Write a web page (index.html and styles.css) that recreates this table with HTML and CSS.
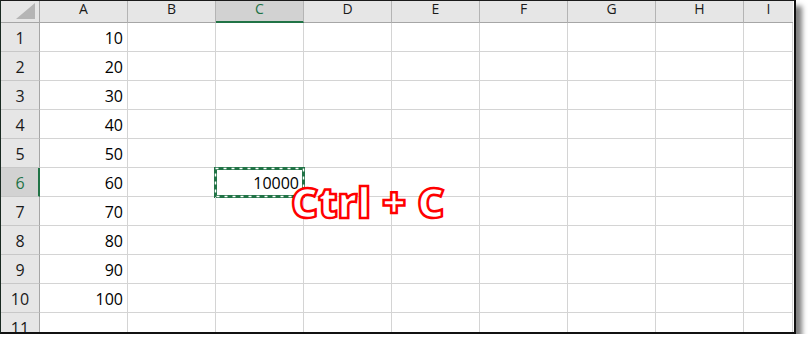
FILE: index.html
```html
<!DOCTYPE html>
<html>
<head>
<meta charset="utf-8">
<link rel="stylesheet" href="styles.css">
</head>
<body>
<div class="sheet">
  <div class="grid">
    <div class="corner"><span class="tri"></span></div>
    <div class="colhead">A</div>
    <div class="colhead">B</div>
    <div class="colhead sel">C</div>
    <div class="colhead">D</div>
    <div class="colhead">E</div>
    <div class="colhead">F</div>
    <div class="colhead">G</div>
    <div class="colhead">H</div>
    <div class="colhead last">I</div>

    <div class="rowhead">1</div><div class="cell">10</div><div class="cell"></div><div class="cell"></div><div class="cell"></div><div class="cell"></div><div class="cell"></div><div class="cell"></div><div class="cell"></div><div class="cell"></div>
    <div class="rowhead">2</div><div class="cell">20</div><div class="cell"></div><div class="cell"></div><div class="cell"></div><div class="cell"></div><div class="cell"></div><div class="cell"></div><div class="cell"></div><div class="cell"></div>
    <div class="rowhead">3</div><div class="cell">30</div><div class="cell"></div><div class="cell"></div><div class="cell"></div><div class="cell"></div><div class="cell"></div><div class="cell"></div><div class="cell"></div><div class="cell"></div>
    <div class="rowhead">4</div><div class="cell">40</div><div class="cell"></div><div class="cell"></div><div class="cell"></div><div class="cell"></div><div class="cell"></div><div class="cell"></div><div class="cell"></div><div class="cell"></div>
    <div class="rowhead">5</div><div class="cell">50</div><div class="cell"></div><div class="cell"></div><div class="cell"></div><div class="cell"></div><div class="cell"></div><div class="cell"></div><div class="cell"></div><div class="cell"></div>
    <div class="rowhead sel">6</div><div class="cell">60</div><div class="cell"></div><div class="cell active">10000<svg class="ants" width="91" height="31" viewBox="0 0 91 31"><rect x="1.5" y="1.5" width="88" height="28" fill="none" stroke="#217346" stroke-width="3"/><rect x="1.5" y="1.5" width="88" height="28" fill="none" stroke="#ffffff" stroke-width="1.5" stroke-dasharray="3 5"/></svg></div><div class="cell"></div><div class="cell"></div><div class="cell"></div><div class="cell"></div><div class="cell"></div><div class="cell"></div>
    <div class="rowhead">7</div><div class="cell">70</div><div class="cell"></div><div class="cell"></div><div class="cell"></div><div class="cell"></div><div class="cell"></div><div class="cell"></div><div class="cell"></div><div class="cell"></div>
    <div class="rowhead">8</div><div class="cell">80</div><div class="cell"></div><div class="cell"></div><div class="cell"></div><div class="cell"></div><div class="cell"></div><div class="cell"></div><div class="cell"></div><div class="cell"></div>
    <div class="rowhead">9</div><div class="cell">90</div><div class="cell"></div><div class="cell"></div><div class="cell"></div><div class="cell"></div><div class="cell"></div><div class="cell"></div><div class="cell"></div><div class="cell"></div>
    <div class="rowhead">10</div><div class="cell">100</div><div class="cell"></div><div class="cell"></div><div class="cell"></div><div class="cell"></div><div class="cell"></div><div class="cell"></div><div class="cell"></div><div class="cell"></div>
    <div class="rowhead">11</div><div class="cell"></div><div class="cell"></div><div class="cell"></div><div class="cell"></div><div class="cell"></div><div class="cell"></div><div class="cell"></div><div class="cell"></div><div class="cell"></div>
  </div>
  <div class="shortcut">Ctrl + C</div>
</div>
</body>
</html>
```

FILE: styles.css
```css
html, body {
  margin: 0;
  padding: 0;
  background: #ffffff;
}

.sheet {
  position: relative;
  width: 796px;
  height: 334px;
  box-sizing: border-box;
  border-top: 1px solid #1a1a1a;
  border-left: 1px solid #1a2a22;
  border-right: 2px solid #111111;
  border-bottom: 2px solid #111111;
  overflow: hidden;
  box-shadow: 6px 6px 5px rgba(0, 0, 0, 0.5);
  font-family: "Open Sans", "Noto Sans", sans-serif;
  background: #ffffff;
}

.grid {
  display: grid;
  grid-template-columns: 39px repeat(8, 88px) 49px;
  grid-template-rows: 22px repeat(11, 29px);
}

.grid > div {
  box-sizing: border-box;
}

.corner {
  position: relative;
  background: #e6e6e6;
  border-right: 1px solid #a6a6a6;
  border-bottom: 1px solid #a6a6a6;
}

.tri {
  position: absolute;
  right: 4px;
  bottom: 3px;
  width: 0;
  height: 0;
  border-left: 19px solid transparent;
  border-bottom: 16px solid #b5b5b5;
}

.colhead {
  background: #e6e6e6;
  border-right: 1px solid #b4b4b4;
  border-bottom: 1px solid #a6a6a6;
  color: #1a1a1a;
  font-size: 14px;
  line-height: 14px;
  text-align: center;
  padding-top: 1px;
}

.colhead.last {
  border-right: none;
}

.colhead.sel {
  background: #d2d2d2;
  color: #217346;
  border-bottom: 2px solid #217346;
}

.rowhead {
  background: #e6e6e6;
  border-right: 1px solid #a6a6a6;
  border-bottom: 1px solid #c8c8c8;
  color: #1a1a1a;
  font-size: 16px;
  line-height: 16px;
  text-align: center;
  display: flex;
  align-items: flex-end;
  justify-content: center;
  padding-bottom: 5px;
}

.rowhead.sel {
  background: #d2d2d2;
  color: #217346;
  border-right: 2px solid #217346;
  padding-left: 1px;
}

.cell {
  position: relative;
  border-right: 1px solid #d4d4d4;
  border-bottom: 1px solid #d4d4d4;
  color: #000000;
  font-size: 16px;
  line-height: 16px;
  display: flex;
  align-items: flex-end;
  justify-content: flex-end;
  padding: 0 4px 5px 0;
}

.ants {
  position: absolute;
  left: -2px;
  top: -1px;
}

.shortcut {
  position: absolute;
  left: 290px;
  top: 180px;
  font-family: "Open Sans", "Noto Sans", sans-serif;
  font-weight: 800;
  font-size: 42px;
  line-height: 42px;
  color: #ffffff;
  -webkit-text-stroke: 2.5px #ff0000;
  white-space: nowrap;
}
```
